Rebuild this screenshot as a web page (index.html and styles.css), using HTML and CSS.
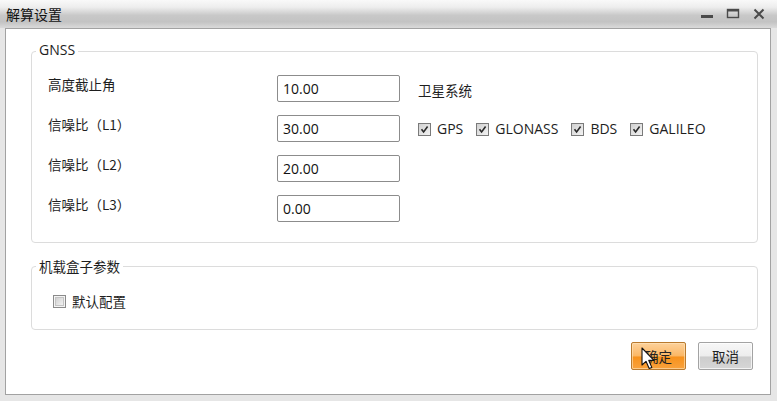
FILE: index.html
```html
<!DOCTYPE html>
<html lang="zh-CN">
<head>
<meta charset="utf-8">
<title>解算设置</title>
<link rel="stylesheet" href="styles.css">
</head>
<body>
<div class="window">
  <div class="titlebar">
    <span class="title">解算设置</span>
    <div class="controls">
      <svg class="ctl" width="14" height="14" viewBox="0 0 14 14"><rect x="1" y="8" width="12" height="3" fill="#4a4a4a"/></svg>
      <svg class="ctl" width="14" height="14" viewBox="0 0 14 14"><rect x="1.5" y="2.5" width="11" height="8" fill="none" stroke="#4a4a4a" stroke-width="1.4"/><rect x="1" y="2" width="12" height="2.5" fill="#4a4a4a"/></svg>
      <svg class="ctl" width="14" height="14" viewBox="0 0 14 14"><path d="M2.5 2.5 L11.5 11.5 M11.5 2.5 L2.5 11.5" stroke="#4a4a4a" stroke-width="2"/></svg>
    </div>
  </div>
  <div class="frame">
    <div class="client">
      <fieldset class="group gnss">
        <legend class="legend-latin">GNSS</legend>
        <div class="grid">
          <span class="label">高度截止角</span>
          <div class="input">10.00</div>
          <span class="side cjk">卫星系统</span>

          <span class="label">信噪比（L1）</span>
          <div class="input">30.00</div>
          <div class="side checks">
            <span class="check"><svg class="box" width="13" height="13" viewBox="0 0 13 13"><rect x="0.5" y="0.5" width="12" height="12" fill="url(#g)" stroke="#7a7a7a"/><path d="M3.5 6.2 L5.6 9 L9.6 3.6" fill="none" stroke="#2a2a2a" stroke-width="1.6"/></svg>GPS</span>
            <span class="check"><svg class="box" width="13" height="13" viewBox="0 0 13 13"><rect x="0.5" y="0.5" width="12" height="12" fill="url(#g)" stroke="#7a7a7a"/><path d="M3.5 6.2 L5.6 9 L9.6 3.6" fill="none" stroke="#2a2a2a" stroke-width="1.6"/></svg>GLONASS</span>
            <span class="check"><svg class="box" width="13" height="13" viewBox="0 0 13 13"><rect x="0.5" y="0.5" width="12" height="12" fill="url(#g)" stroke="#7a7a7a"/><path d="M3.5 6.2 L5.6 9 L9.6 3.6" fill="none" stroke="#2a2a2a" stroke-width="1.6"/></svg>BDS</span>
            <span class="check"><svg class="box" width="13" height="13" viewBox="0 0 13 13"><rect x="0.5" y="0.5" width="12" height="12" fill="url(#g)" stroke="#7a7a7a"/><path d="M3.5 6.2 L5.6 9 L9.6 3.6" fill="none" stroke="#2a2a2a" stroke-width="1.6"/></svg>GALILEO</span>
          </div>

          <span class="label">信噪比（L2）</span>
          <div class="input">20.00</div>
          <span></span>

          <span class="label">信噪比（L3）</span>
          <div class="input">0.00</div>
          <span></span>
        </div>
      </fieldset>

      <fieldset class="group box2">
        <legend class="legend-cjk">机载盒子参数</legend>
        <div class="box2-body">
          <span class="check cjk"><svg class="box" width="13" height="13" viewBox="0 0 13 13"><rect x="0.5" y="0.5" width="12" height="12" fill="#f4f4f4" stroke="#8a8a8a"/><rect x="2.5" y="2.5" width="8" height="8" fill="url(#g)" stroke="#c4c4c4"/></svg>默认配置</span>
        </div>
      </fieldset>

      <div class="buttons">
        <button class="btn primary">确定<svg class="cursor" width="15" height="23" viewBox="0 0 15 23"><path d="M1 1 L1 18 L5 14.3 L8.2 21.5 L10.8 20.4 L7.7 13.4 L13 13.4 Z" fill="#fff" stroke="#111" stroke-width="1.1" stroke-linejoin="round"/></svg></button>
        <button class="btn">取消</button>
      </div>
    </div>
  </div>
</div>
<svg width="0" height="0" class="defs">
  <defs>
    <linearGradient id="g" x1="0" y1="0" x2="1" y2="1">
      <stop offset="0" stop-color="#cfcfcf"/>
      <stop offset="1" stop-color="#f4f4f4"/>
    </linearGradient>
  </defs>
</svg>
</body>
</html>
```
FILE: styles.css
```css
html, body {
  margin: 0;
  padding: 0;
  width: 777px;
  height: 401px;
  overflow: hidden;
  background: #e6e6e6;
  font-family: "Open Sans", "Noto Sans CJK SC", sans-serif;
  font-size: 14px;
  color: #1e1e1e;
}

.defs { position: absolute; }

.window {
  display: flex;
  flex-direction: column;
  height: 401px;
}

.titlebar {
  height: 28px;
  flex: none;
  display: flex;
  align-items: center;
  padding-left: 6px;
  background: linear-gradient(to bottom, #f9f9f9 0%, #eeeeee 25%, #c8c8c8 55%, #c3c3c3 78%, #dadada 100%);
}

.title {
  font-family: "Noto Sans CJK SC", sans-serif;
  font-size: 14px;
  color: #111;
  line-height: 18px;
}

.controls {
  margin-left: auto;
  display: flex;
  gap: 12px;
  padding-right: 11px;
  align-items: center;
}

.ctl { display: block; }

.frame {
  flex: 1;
  padding: 0 6px 6px 5px;
  display: flex;
}

.client {
  flex: 1;
  background: #fff;
  border: 1px solid #a2a2a2;
  padding: 12px 12px 0 25px;
  display: flex;
  flex-direction: column;
}

.group {
  margin: 0;
  padding: 0;
  border: 1px solid #dcdcdc;
  border-radius: 4px;
  min-width: 0;
}

.legend-latin {
  margin-left: 4px;
  padding: 0 3px 3px;
  line-height: 18px;
  font-size: 14px;
}

.legend-cjk {
  margin-left: 4px;
  padding: 0 3px;
  line-height: 18px;
  font-size: 13.5px;
  font-family: "Noto Sans CJK SC", sans-serif;
}

.grid {
  display: grid;
  grid-template-columns: 211px 123px auto;
  grid-auto-rows: 27px;
  row-gap: 13px;
  column-gap: 18px;
  padding: 13px 0 20px 16px;
}

.label {
  font-family: "Noto Sans CJK SC", sans-serif;
  font-size: 13.5px;
  line-height: 18px;
  align-self: start;
}

.input {
  box-sizing: border-box;
  height: 27px;
  border: 1px solid #8c8c8c;
  border-radius: 2px;
  padding: 0 5px;
  line-height: 25px;
  font-size: 14px;
  color: #111;
}

.side {
  align-self: center;
}

.cjk {
  font-family: "Noto Sans CJK SC", sans-serif;
  font-size: 13.5px;
}

.side.cjk { margin-top: 2px; }

.checks {
  display: flex;
  gap: 13px;
  margin-top: 1px;
}

.check {
  display: inline-flex;
  align-items: center;
  gap: 6px;
  line-height: 18px;
}

.box { display: block; flex: none; }

.box2 {
  margin-top: 14px;
}

.box2-body {
  padding: 17px 0 19px 21px;
  height: 18px;
}

.buttons {
  display: flex;
  justify-content: flex-end;
  gap: 12px;
  padding-right: 5px;
  margin-top: 12px;
}

.btn {
  position: relative;
  width: 55px;
  height: 28px;
  padding: 0;
  border: 1px solid #a3a3a3;
  border-radius: 2px;
  font-family: "Noto Sans CJK SC", sans-serif;
  font-size: 13.5px;
  color: #222;
  background: linear-gradient(to bottom, #f7f7f7 0%, #ededed 48%, #cdcdcd 55%, #d6d6d6 100%);
  box-shadow: inset 0 0 0 1px rgba(255,255,255,0.7);
}

.btn.primary {
  border-color: #b97a2e;
  background: linear-gradient(to bottom, #fdd19a 0%, #fbb867 48%, #f7921d 55%, #f9a23c 100%);
  box-shadow: inset 0 0 0 1px rgba(255,230,190,0.6);
}

.cursor {
  position: absolute;
  left: 9px;
  top: 4px;
}
```
